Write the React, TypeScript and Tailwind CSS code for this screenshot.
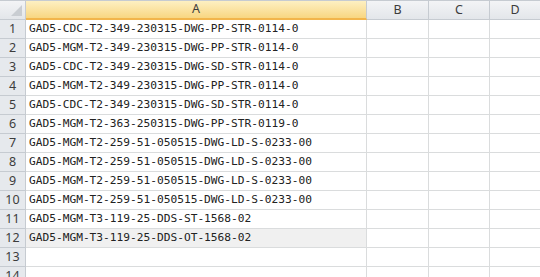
import React from "react";

const rows = [
  "GAD5-CDC-T2-349-230315-DWG-PP-STR-0114-0",
  "GAD5-MGM-T2-349-230315-DWG-PP-STR-0114-0",
  "GAD5-CDC-T2-349-230315-DWG-SD-STR-0114-0",
  "GAD5-MGM-T2-349-230315-DWG-PP-STR-0114-0",
  "GAD5-CDC-T2-349-230315-DWG-SD-STR-0114-0",
  "GAD5-MGM-T2-363-250315-DWG-PP-STR-0119-0",
  "GAD5-MGM-T2-259-51-050515-DWG-LD-S-0233-00",
  "GAD5-MGM-T2-259-51-050515-DWG-LD-S-0233-00",
  "GAD5-MGM-T2-259-51-050515-DWG-LD-S-0233-00",
  "GAD5-MGM-T2-259-51-050515-DWG-LD-S-0233-00",
  "GAD5-MGM-T3-119-25-DDS-ST-1568-02",
  "GAD5-MGM-T3-119-25-DDS-OT-1568-02",
  "",
  "",
];

const sans = { fontFamily: '"Noto Sans", "Liberation Sans", sans-serif' };
const mono = { fontFamily: '"DejaVu Sans Mono", "Liberation Mono", monospace' };

export default function App() {
  return (
    <div className="w-[540px] h-[277px] overflow-hidden bg-white">
      {/* header row */}
      <div className="flex h-[20px] border-t border-[#c6cbd1]">
        <div className="w-[26px] shrink-0 relative bg-gradient-to-b from-[#f3f4f6] to-[#e3e6ea] border-r border-b border-[#c6cbd1]">
          <svg className="absolute right-[3px] bottom-[3px]" width="11" height="11" viewBox="0 0 11 11">
            <polygon points="11,0 11,11 0,11" fill="#c9cdd2" />
          </svg>
        </div>
        <div
          className="w-[341px] shrink-0 flex items-center justify-center bg-gradient-to-b from-[#fdf0c2] to-[#f8d681] border-r border-[#c6cbd1] border-b-2 border-b-[#f2b54c] text-[12.5px] text-[#3c3c3c]"
          style={sans}
        >
          A
        </div>
        {["B", "C"].map((c, i) => (
          <div
            key={c}
            className={`${i === 0 ? "w-[62px]" : "w-[61px]"} shrink-0 flex items-center justify-center bg-gradient-to-b from-[#f3f4f6] to-[#e3e6ea] border-r border-b border-[#c6cbd1] text-[12.5px] text-[#3c3c3c]`}
            style={sans}
          >
            {c}
          </div>
        ))}
        <div
          className="flex-1 flex items-center justify-center bg-gradient-to-b from-[#f3f4f6] to-[#e3e6ea] border-b border-[#c6cbd1] text-[12.5px] text-[#3c3c3c]"
          style={sans}
        >
          D
        </div>
      </div>
      {rows.map((txt, i) => (
        <div key={i} className="flex h-[19px]">
          <div
            className="w-[26px] shrink-0 flex items-center justify-center bg-[#e6e9ed] border-r border-b border-[#c6cbd1] text-[12.5px] text-[#3c3c3c]"
            style={sans}
          >
            {i + 1}
          </div>
          <div
            className={`w-[341px] shrink-0 flex items-center pl-[3px] border-r border-b border-[#dadcdd] text-[11.2px] text-[#222] whitespace-nowrap overflow-hidden ${i === 11 ? "bg-[#f0f0f0]" : ""}`}
            style={mono}
          >
            {txt}
          </div>
          <div className="w-[62px] shrink-0 border-r border-b border-[#dadcdd]" />
          <div className="w-[61px] shrink-0 border-r border-b border-[#dadcdd]" />
          <div className="flex-1 border-b border-[#dadcdd]" />
        </div>
      ))}
    </div>
  );
}
